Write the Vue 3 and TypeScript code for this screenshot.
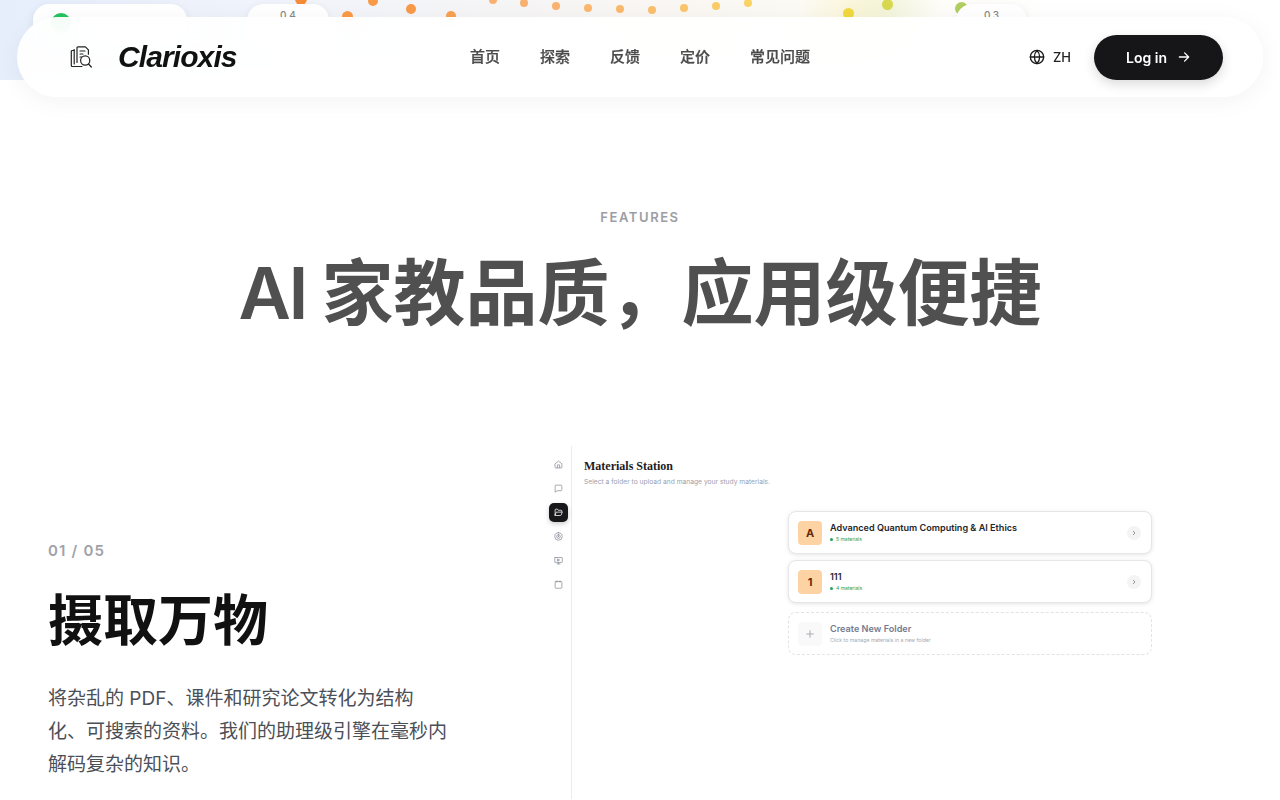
<template>
  <div class="page">
    <!-- 上一屏图表的底部，被导航盖住一部分 -->
    <div class="hero-tail">
      <span
        v-for="(dot, index) in dots"
        :key="index"
        class="dot"
        :style="{ left: dot.x + 'px', top: dot.y + 'px', width: dot.size + 'px', height: dot.size + 'px', background: dot.color }"
      ></span>
      <div class="chip chip-status"><i class="chip-led"></i></div>
      <div class="chip chip-a">0.4</div>
      <div class="chip chip-b">0.3</div>
    </div>

    <header class="nav">
      <div class="brand">
        <svg class="brand-icon" width="24" height="24" viewBox="0 0 24 24" fill="none" stroke="#222" stroke-width="1.2" stroke-linecap="round" stroke-linejoin="round">
          <path d="M5 5.5H3.2a.9.9 0 0 0-.9.9v14.2c0 .5.4.9.9.9H13" />
          <path d="M8 17.5V2.8c0-.5.4-.9.9-.9h7.5l3 3v4.3" />
          <path d="M5.2 19V4.5" />
          <path d="M11 6h5M11 9h3M11 12h1.5" />
          <circle cx="16.2" cy="15.5" r="4.6" />
          <path d="M19.6 19l2.7 3" />
        </svg>
        <span class="brand-name">Clarioxis</span>
      </div>
      <nav class="links">
        <a v-for="link in links" :key="link">{{ link }}</a>
      </nav>
      <div class="actions">
        <div class="lang">
          <svg width="16" height="16" viewBox="0 0 24 24" fill="none" stroke="#1a1a1a" stroke-width="2" stroke-linecap="round" stroke-linejoin="round">
            <circle cx="12" cy="12" r="10" />
            <path d="M2 12h20" />
            <path d="M12 2a15 15 0 0 1 4 10 15 15 0 0 1-4 10 15 15 0 0 1-4-10 15 15 0 0 1 4-10z" />
          </svg>
          <span>ZH</span>
        </div>
        <button class="login">
          Log in
          <svg width="14" height="14" viewBox="0 0 24 24" fill="none" stroke="#fff" stroke-width="2.2" stroke-linecap="round" stroke-linejoin="round">
            <path d="M4 12h16M13 5l7 7-7 7" />
          </svg>
        </button>
      </div>
    </header>

    <section class="features">
      <p class="eyebrow">FEATURES</p>
      <h2 class="headline"><span class="latin">AI </span>家教品质，应用级便捷</h2>

      <div class="feature-row">
        <div class="copy">
          <p class="step">01 / 05</p>
          <h3 class="copy-title">摄取万物</h3>
          <p class="copy-text">将杂乱的 PDF、课件和研究论文转化为结构<br />化、可搜索的资料。我们的助理级引擎在毫秒内<br />解码复杂的知识。</p>
        </div>

        <div class="preview">
          <aside class="rail">
            <span v-for="item in railIcons" :key="item.name" class="rail-item" :class="{ active: item.active }">
              <svg width="9" height="9" viewBox="0 0 24 24" fill="none" :stroke="item.active ? '#fff' : '#8a8f98'" stroke-width="2" stroke-linecap="round" stroke-linejoin="round">
                <path v-for="d in item.paths" :key="d" :d="d" />
              </svg>
            </span>
          </aside>
          <div class="station">
            <h4 class="station-title">Materials Station</h4>
            <p class="station-sub">Select a folder to upload and manage your study materials.</p>
            <div class="folders">
              <div v-for="folder in folders" :key="folder.name" class="folder">
                <span class="folder-badge">{{ folder.badge }}</span>
                <div class="folder-body">
                  <p class="folder-name">{{ folder.name }}</p>
                  <p class="folder-count"><i></i>{{ folder.count }}</p>
                </div>
                <span class="folder-go">
                  <svg width="6" height="6" viewBox="0 0 24 24" fill="none" stroke="#777" stroke-width="3" stroke-linecap="round" stroke-linejoin="round"><path d="M9 5l7 7-7 7" /></svg>
                </span>
              </div>
              <div class="folder folder-new">
                <span class="folder-badge plus">
                  <svg width="10" height="10" viewBox="0 0 24 24" fill="none" stroke="#9a9ea6" stroke-width="2" stroke-linecap="round"><path d="M12 4v16M4 12h16" /></svg>
                </span>
                <div class="folder-body">
                  <p class="folder-name">Create New Folder</p>
                  <p class="folder-hint">Click to manage materials in a new folder</p>
                </div>
              </div>
            </div>
          </div>
        </div>
      </div>
    </section>
  </div>
</template>

<script setup lang="ts">
interface Dot {
  x: number
  y: number
  size: number
  color: string
}

const links = ['首页', '探索', '反馈', '定价', '常见问题']

// 圆点坐标对应图表上的刻度，x / y 为左上角
const dots: Dot[] = [
  { x: 295, y: -7, size: 12, color: '#f98d35' },
  { x: 342, y: 11, size: 11, color: '#f99a48' },
  { x: 368, y: -4, size: 10, color: '#f99a48' },
  { x: 406, y: 4, size: 10, color: '#f99a48' },
  { x: 446, y: 11, size: 10, color: '#f9a050' },
  { x: 489, y: -4, size: 8, color: '#fab070' },
  { x: 520, y: -1, size: 8, color: '#fab070' },
  { x: 552, y: 2, size: 8, color: '#fab36e' },
  { x: 584, y: 4, size: 8, color: '#fbb76e' },
  { x: 616, y: 5, size: 8, color: '#fbb96c' },
  { x: 648, y: 6, size: 8, color: '#fbbf6c' },
  { x: 680, y: 4, size: 8, color: '#fbc56c' },
  { x: 712, y: 2, size: 8, color: '#fbcb68' },
  { x: 744, y: -1, size: 8, color: '#fbd264' },
  { x: 843, y: 8, size: 11, color: '#f0d83c' },
  { x: 882, y: -1, size: 11, color: '#d8d850' },
  { x: 955, y: 2, size: 13, color: '#b4d060' },
]

const railIcons = [
  { name: 'home', active: false, paths: ['M3 10l9-7 9 7v10a1 1 0 0 1-1 1H4a1 1 0 0 1-1-1z', 'M9 21v-8h6v8'] },
  { name: 'chat', active: false, paths: ['M21 16a2 2 0 0 1-2 2H8l-5 4V5a2 2 0 0 1 2-2h14a2 2 0 0 1 2 2z'] },
  { name: 'folder', active: true, paths: ['M3 19V5a2 2 0 0 1 2-2h4l2 3h8a2 2 0 0 1 2 2v2', 'M3 19l3-8h16l-3 8a2 2 0 0 1-2 1H5a2 2 0 0 1-2-1z'] },
  { name: 'target', active: false, paths: ['M12 2a10 10 0 1 0 0 20 10 10 0 0 0 0-20z', 'M12 7a5 5 0 1 0 0 10 5 5 0 0 0 0-10z', 'M12 11a1 1 0 1 0 0 2 1 1 0 0 0 0-2z'] },
  { name: 'screen', active: false, paths: ['M3 4h18a1 1 0 0 1 1 1v11a1 1 0 0 1-1 1H3a1 1 0 0 1-1-1V5a1 1 0 0 1 1-1z', 'M12 17v4M8 21h8', 'M10 8l5 2.5-5 2.5z'] },
  { name: 'board', active: false, paths: ['M5 4h14a2 2 0 0 1 2 2v14a2 2 0 0 1-2 2H5a2 2 0 0 1-2-2V6a2 2 0 0 1 2-2z', 'M8 2v4M16 2v4'] },
]

const folders = [
  { badge: 'A', name: 'Advanced Quantum Computing & AI Ethics', count: '5 materials' },
  { badge: '1', name: '111', count: '4 materials' },
]
</script>

<style scoped>
.page {
  position: relative;
  height: 800px;
  overflow: hidden;
  background: #fff;
  color: #111;
  font-family: Inter, "Noto Sans CJK SC", sans-serif;
}

.hero-tail {
  position: relative;
  height: 80px;
  overflow: hidden;
  background:
    radial-gradient(circle at 850px 14px, rgba(240, 225, 120, 0.22), transparent 50px),
    radial-gradient(circle at 890px 6px, rgba(200, 215, 120, 0.2), transparent 50px),
    linear-gradient(90deg, #e6eefc 0%, #f1f4fb 22%, #f9f6f3 50%, #fdfbf4 65%, #ffffff 82%);
}

.dot {
  position: absolute;
  border-radius: 50%;
  filter: blur(0.4px);
}

.chip {
  position: absolute;
  top: 4px;
  height: 40px;
  border-radius: 16px;
  background: #fff;
  box-shadow: 0 2px 8px rgba(20, 30, 60, 0.08);
  font-size: 10px;
  font-weight: 500;
  color: #888;
  text-align: center;
  line-height: 22px;
}

.chip-status {
  left: 33px;
  width: 154px;
}

.chip-led {
  position: absolute;
  left: 18px;
  top: 9px;
  width: 20px;
  height: 20px;
  border-radius: 50%;
  background: #22c55e;
}

.chip-a {
  left: 247px;
  width: 82px;
}

.chip-b {
  left: 956px;
  width: 71px;
}

.nav {
  position: absolute;
  top: 17px;
  left: 17px;
  width: 1246px;
  height: 80px;
  box-sizing: border-box;
  padding: 0 40px 0 52px;
  display: flex;
  align-items: center;
  justify-content: space-between;
  border-radius: 40px;
  background: rgba(255, 255, 255, 0.92);
  box-shadow: 0 4px 24px rgba(0, 0, 0, 0.05);
  backdrop-filter: blur(16px);
}

.brand {
  display: flex;
  align-items: center;
  gap: 25px;
  width: 288px;
}

.brand-name {
  font-family: "Liberation Sans", sans-serif;
  font-size: 30px;
  font-weight: 700;
  font-style: italic;
  letter-spacing: -0.03em;
  color: #111;
}

.links {
  display: flex;
  gap: 40px;
  padding-bottom: 4px;
  font-size: 15px;
  font-weight: 500;
  color: #4b4b4b;
  -webkit-text-stroke: 0.25px #4b4b4b;
}

.actions {
  display: flex;
  align-items: center;
  gap: 23px;
  width: 300px;
  justify-content: flex-end;
}

.lang {
  display: flex;
  align-items: center;
  gap: 8px;
  font-size: 13px;
  font-weight: 500;
  color: #222;
}

.login {
  width: 129px;
  height: 45px;
  display: flex;
  align-items: center;
  justify-content: center;
  gap: 10px;
  border: none;
  border-radius: 23px;
  background: #161618;
  box-shadow: 0 4px 12px rgba(0, 0, 0, 0.15);
  color: #fff;
  font-family: inherit;
  font-size: 14px;
  font-weight: 600;
}

.features {
  padding-top: 129px;
}

.eyebrow {
  margin: 0;
  text-align: center;
  font-size: 13px;
  line-height: 16px;
  font-weight: 600;
  letter-spacing: 0.12em;
  color: #9c9ea5;
}

.headline {
  margin: 24px 0 0;
  text-align: center;
  font-size: 72px;
  line-height: 88px;
  font-weight: 700;
  color: #505050;
}

/* Inter 在大字号下偏宽，单独收紧 */
.latin {
  font-weight: 600;
  letter-spacing: -0.035em;
}

.feature-row {
  margin-top: 109px;
  padding-left: 48px;
  display: flex;
  align-items: flex-start;
}

.copy {
  width: 497px;
  padding-top: 95px;
  flex: none;
}

.step {
  margin: 0;
  font-size: 15px;
  line-height: 20px;
  font-weight: 600;
  letter-spacing: 0.08em;
  color: #a0a2a8;
}

.copy-title {
  margin: 25px 0 0;
  font-size: 55px;
  line-height: 68px;
  font-weight: 700;
  color: #111;
}

.copy-text {
  margin: 28px 0 0;
  font-size: 19px;
  line-height: 33px;
  color: #4b4f57;
}

.preview {
  display: flex;
  height: 353px;
}

.rail {
  width: 23px;
  border-right: 1px solid #ececee;
  display: flex;
  flex-direction: column;
  align-items: center;
  padding: 8.5px 1px 0 2px;
  gap: 5px;
  flex: none;
  box-sizing: content-box;
}

.rail-item {
  width: 19px;
  height: 19px;
  display: flex;
  align-items: center;
  justify-content: center;
  border-radius: 5px;
}

.rail-item.active {
  background: #18181a;
  box-shadow: 0 2px 5px rgba(0, 0, 0, 0.2);
}

.station {
  padding: 13px 0 0 12px;
  width: 568px;
  box-sizing: border-box;
}

.station-title {
  margin: 0;
  font-family: "Liberation Serif", serif;
  font-size: 12px;
  line-height: 14px;
  font-weight: 700;
  color: #1d1d1f;
}

.station-sub {
  margin: 5px 0 0;
  font-size: 6.7px;
  line-height: 9px;
  color: #9aa0ad;
}

.folders {
  margin: 24px 0 0 204px;
  width: 364px;
  display: flex;
  flex-direction: column;
  gap: 6px;
}

.folder {
  height: 43px;
  box-sizing: border-box;
  padding: 0 10px 0 9px;
  display: flex;
  align-items: center;
  gap: 8px;
  border: 1px solid #e6e6e9;
  border-radius: 8px;
  background: #fff;
  box-shadow: 0 1px 4px rgba(0, 0, 0, 0.1);
}

.folder-new {
  margin-top: 3px;
  border: 1px dashed #e2e3e8;
  box-shadow: none;
}

.folder-badge {
  width: 24px;
  height: 24px;
  border-radius: 4px;
  flex: none;
  display: flex;
  align-items: center;
  justify-content: center;
  background: #fdd3a4;
  color: #632a0c;
  font-size: 11px;
  font-weight: 700;
}

.folder-badge.plus {
  background: #f9f9fa;
}

.folder-body {
  flex: 1;
}

.folder-name {
  margin: 0;
  font-size: 9.1px;
  line-height: 11px;
  font-weight: 600;
  color: #26262a;
}

.folder-new .folder-name {
  color: #747b92;
}

.folder-count {
  margin: 3px 0 0;
  display: flex;
  align-items: center;
  gap: 3px;
  font-size: 5px;
  line-height: 7px;
  color: #22a35a;
}

.folder-count i {
  width: 3px;
  height: 3px;
  border-radius: 50%;
  background: #22a35a;
}

.folder-hint {
  margin: 3px 0 0;
  font-size: 5.2px;
  line-height: 7px;
  color: #a6a9b2;
}

.folder-go {
  width: 14px;
  height: 14px;
  border-radius: 50%;
  background: #f4f4f5;
  display: flex;
  align-items: center;
  justify-content: center;
}
</style>
